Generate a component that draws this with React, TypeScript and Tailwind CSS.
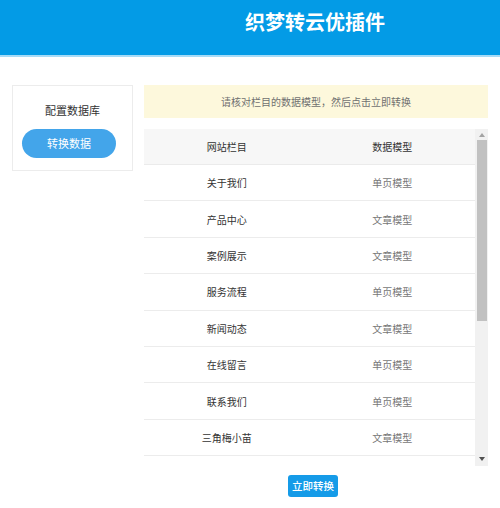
import React from "react";

const rows: [string, string][] = [
  ["关于我们", "单页模型"],
  ["产品中心", "文章模型"],
  ["案例展示", "文章模型"],
  ["服务流程", "单页模型"],
  ["新闻动态", "文章模型"],
  ["在线留言", "单页模型"],
  ["联系我们", "单页模型"],
  ["三角梅小苗", "文章模型"],
];

export default function App() {
  return (
    <div className="w-[500px] h-[508px] bg-white overflow-hidden font-['Noto_Sans_CJK_SC','Microsoft_YaHei',sans-serif]">
      <header className="h-[55px] bg-[#039be6] flex">
        <div className="w-[143px]" />
        <div className="w-[344px] flex justify-center pt-[8px]">
          <h1 className="text-white text-[20px] font-bold leading-[28px] tracking-[0px]">织梦转云优插件</h1>
        </div>
      </header>
      <div className="h-[2px] bg-[#a6dbf7]" />
      <div className="flex pt-[28px] pl-[12px] gap-[11px]">
        <div className="w-[121px] h-[86px] border border-[#ececec] flex flex-col items-start self-start">
          <div className="mt-[17px] w-full text-center text-[11px] leading-[14px] text-[#333]">配置数据库</div>
          <button className="mt-[12px] ml-[9px] w-[94px] h-[29px] rounded-full bg-[#43a5ea] text-white text-[11px] leading-[29px]">转换数据</button>
        </div>
        <div className="w-[344px] flex flex-col">
          <div className="h-[33px] bg-[#fdf8dc] flex items-center justify-center text-[10px] text-[#707070]">
            请核对栏目的数据模型，然后点击立即转换
          </div>
          <div className="mt-[11px] flex h-[337px]">
            <div className="flex-1 overflow-hidden">
              <div className="h-[36px] bg-[#f7f7f7] border-b border-[#ebebeb] flex items-center text-[10px] text-[#333]">
                <div className="flex-1 text-center">网站栏目</div>
                <div className="flex-1 text-center">数据模型</div>
              </div>
              {rows.map(([a, b]) => (
                <div key={a} className="h-[36.4px] border-b border-[#ececec] flex items-center text-[10px]">
                  <div className="flex-1 text-center text-[#333]">{a}</div>
                  <div className="flex-1 text-center text-[#777]">{b}</div>
                </div>
              ))}
            </div>
            <div className="w-[13px] bg-[#f1f1f1] flex flex-col items-center">
              <div className="h-[11px] flex items-center justify-center">
                <svg width="6" height="4" viewBox="0 0 6 4"><path d="M0 4 L3 0 L6 4 Z" fill="#a3a3a3" /></svg>
              </div>
              <div className="w-[10px] h-[181px] bg-[#c1c1c1]" />
              <div className="flex-1" />
              <div className="h-[14px] flex items-center justify-center">
                <svg width="6" height="4" viewBox="0 0 6 4"><path d="M0 0 L6 0 L3 4 Z" fill="#505050" /></svg>
              </div>
            </div>
          </div>
          <div className="flex justify-center pr-[6px] mt-[9px]">
            <button className="w-[50px] h-[22px] rounded-[3px] bg-[#159be8] text-white text-[10.5px] font-medium leading-[22px]">立即转换</button>
          </div>
        </div>
      </div>
    </div>
  );
}
